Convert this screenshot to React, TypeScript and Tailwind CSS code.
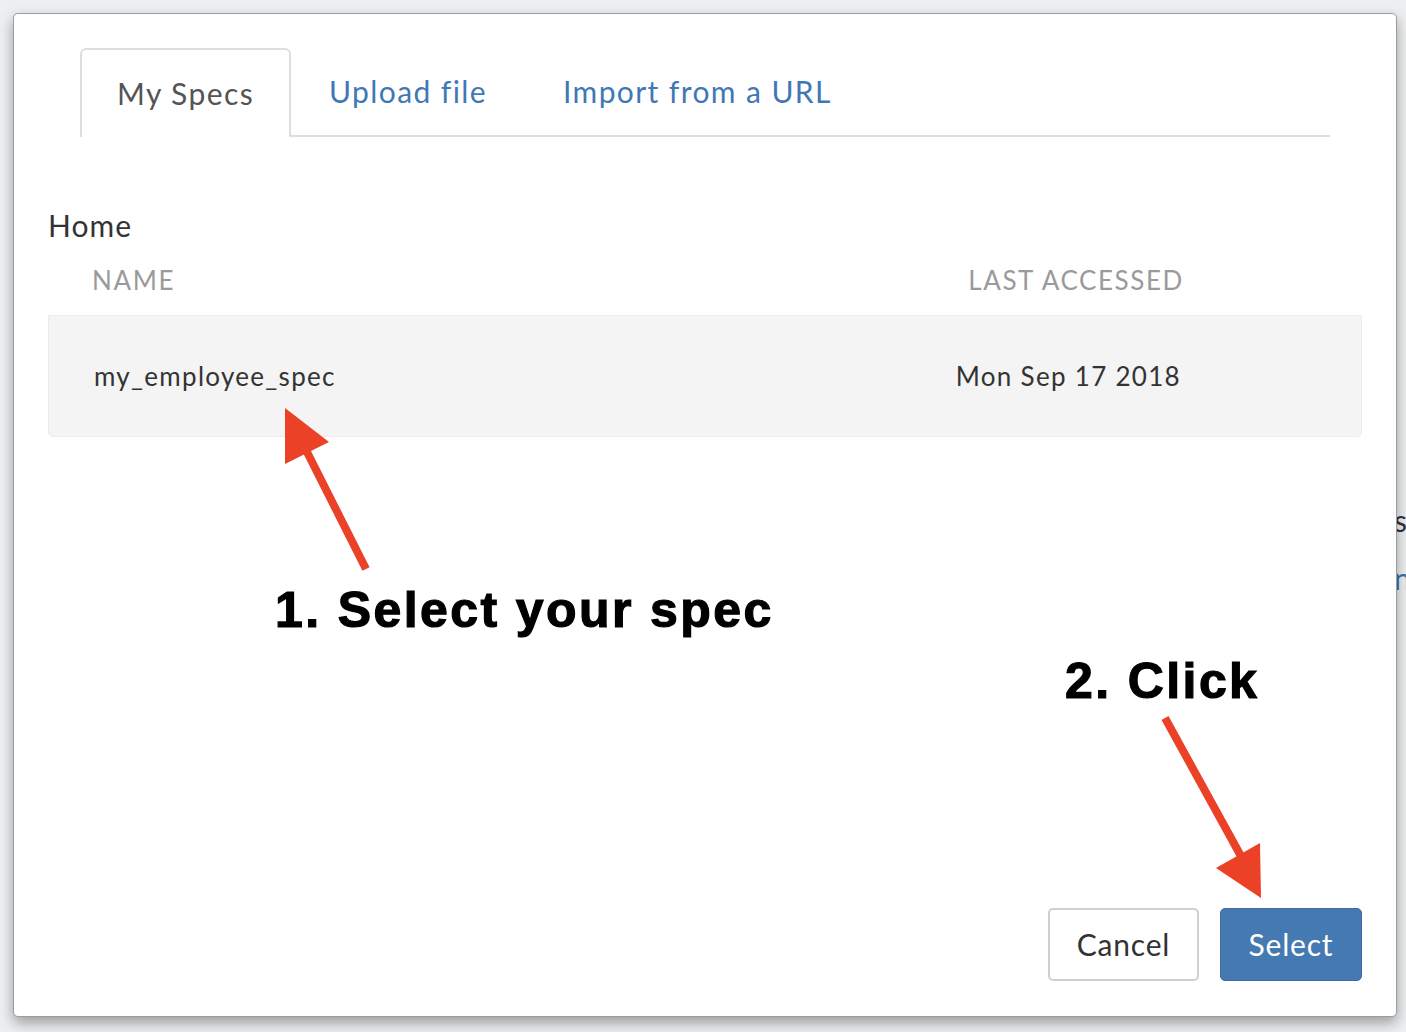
import React from "react";

const lato = { fontFamily: "Lato, 'Open Sans', sans-serif" };
const arial = { fontFamily: "'Liberation Sans', Arial, sans-serif" };

const tabs = ["My Specs", "Upload file", "Import from a URL"];

function Arrows() {
    return (
        <svg className="absolute inset-0 pointer-events-none" width={1406} height={1032}>
            {/* 1 -> spec row */}
            <line x1={366} y1={569} x2={304} y2={446} stroke="#ea4127" strokeWidth={8} />
            <polygon points="285,408 329,442 285,464" fill="#ea4127" />
            {/* 2 -> select button */}
            <line x1={1165} y1={718} x2={1242} y2={858} stroke="#ea4127" strokeWidth={8} />
            <polygon points="1260,843 1216,868 1261,898" fill="#ea4127" />
        </svg>
    );
}

export default function App() {
    return (
        <div className="relative w-[1406px] h-[1032px] overflow-hidden bg-[#eeeff0] pt-[13px] pl-[13px]" style={lato}>
            {/* page behind the dialog, peeking out on the right */}
            <div className="absolute left-[1394px] top-[500px] text-[30px] leading-[40px] text-[#333]">
                <div>s</div>
                <div className="mt-[18px] text-[#3f72a9]">n</div>
            </div>

            <div className="relative z-10 w-[1384px] h-[1004px] bg-white border border-[#9c9c9c] rounded-[5px] shadow-[0_6px_14px_rgba(0,0,0,0.35)] flex flex-col px-[34px] pt-[34px] pb-[35px]">
                {/* tabs */}
                <div className="mx-[32px] flex border-b-2 border-[#dedede] h-[89px]">
                    {tabs.map((t, i) => (
                        <div
                            key={t}
                            className={
                                i === 0
                                    ? "-mb-[2px] px-[35px] flex items-center border-2 border-b-0 border-[#dedede] rounded-t-[6px] bg-white text-[30px] tracking-[1.4px] text-[#555]"
                                    : "px-[38px] flex items-center text-[30px] tracking-[1.4px] text-[#3f78b5]"
                            }
                        >
                            {t}
                        </div>
                    ))}
                </div>

                <div className="mt-[70px] text-[30px] leading-[36px] text-[#333] tracking-[1px]">Home</div>

                <div className="mt-[22px] flex text-[26px] leading-[30px] tracking-[1.6px] text-[#9a9a9a] uppercase">
                    <div className="pl-[44px] flex-1">Name</div>
                    <div className="pr-[178px]">Last accessed</div>
                </div>

                <div className="mt-[20px] h-[122px] flex items-center bg-[#f4f4f4] border border-[#ececec] rounded-b-[5px] text-[26px] tracking-[1.3px] text-[#333]">
                    <div className="pl-[45px] flex-1">my_employee_spec</div>
                    <div className="pr-[180px]">Mon Sep 17 2018</div>
                </div>

                <div className="flex-1" />

                <div className="flex justify-end gap-[21px]">
                    <button className="w-[151px] h-[73px] border-2 border-[#cfcfcf] rounded-[5px] bg-white text-[30px] tracking-[0.8px] text-[#333]">
                        Cancel
                    </button>
                    <button className="w-[142px] h-[73px] rounded-[5px] bg-[#4579b2] border border-[#3d6da3] text-[30px] tracking-[0.8px] text-white">
                        Select
                    </button>
                </div>
            </div>

            {/* annotations drawn over the dialog */}
            <div className="absolute inset-0 z-20 pointer-events-none">
                <Arrows />
                <div
                    className="absolute left-[275px] top-[585px] text-[50px] leading-[50px] font-bold tracking-[2.4px] text-black whitespace-nowrap [-webkit-text-stroke:1.2px_black]"
                    style={arial}
                >
                    1. Select your spec
                </div>
                <div
                    className="absolute left-[1065px] top-[656px] text-[50px] leading-[50px] font-bold tracking-[2.4px] text-black whitespace-nowrap [-webkit-text-stroke:1.2px_black]"
                    style={arial}
                >
                    2. Click
                </div>
            </div>
        </div>
    );
}
